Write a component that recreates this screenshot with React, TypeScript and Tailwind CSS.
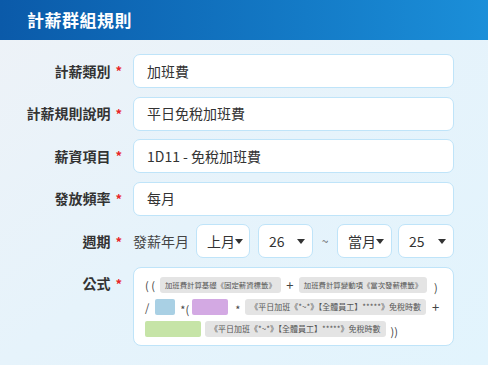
import { ReactNode } from "react";

const font = { fontFamily: '"Noto Sans CJK TC", "Noto Sans", sans-serif' };

function Label({ text }: { text: string }) {
  return (
    <div className="w-[122px] shrink-0 flex justify-end items-center font-bold text-[14px] text-[#333] whitespace-nowrap">
      {text}
      <span className="text-[#e8262b] ml-[5px] text-[13px]">*</span>
    </div>
  );
}

function Field({ label, children }: { label: string; children: ReactNode }) {
  return (
    <div className="flex items-start gap-[11px]">
      <div className="h-[34px] flex items-center shrink-0">
        <Label text={label} />
      </div>
      {children}
    </div>
  );
}

function Input({ value }: { value: string }) {
  return (
    <div className="w-[321px] h-[34px] shrink-0 bg-white border border-[#bfe4f9] rounded-[7px] flex items-center px-[13px] text-[14px] text-[#333]">
      {value}
    </div>
  );
}

function Select({ value, w }: { value: string; w: string }) {
  return (
    <div className={`${w} shrink-0 h-[34px] bg-white border border-[#bfe4f9] rounded-[7px] flex items-center justify-between pl-[10px] pr-[7px] text-[14px] text-[#333] whitespace-nowrap`}>
      <span>{value}</span>
      <svg width="8" height="5" viewBox="0 0 8 5" className="shrink-0">
        <path d="M0 0 L8 0 L4 5 Z" fill="#333" />
      </svg>
    </div>
  );
}

function Chip({ text, small }: { text: string; small?: boolean }) {
  return (
    <span className={`h-[16px] shrink-0 px-[5px] bg-[#e4e4e4] rounded-[3px] ${small ? "text-[7.4px]" : "text-[8px]"} text-[#555] flex items-center whitespace-nowrap`}>
      {text}
    </span>
  );
}

function Sym({ t }: { t: string }) {
  return <span className="shrink-0 whitespace-nowrap text-[11px] text-[#444]">{t}</span>;
}

export default function App() {
  return (
    <div style={font} className="w-[488px] h-[365px] overflow-hidden bg-gradient-to-br from-[#eef2f7] via-[#e6f3fb] to-[#e2f4fd]">
      <div className="h-[40px] bg-gradient-to-r from-[#0b5aa9] to-[#1b8fd9] flex items-center pl-[27px]">
        <h1 className="text-white font-bold text-[17px] tracking-[0.5px]">計薪群組規則</h1>
      </div>
      <div className="pt-[14px] flex flex-col gap-[8.6px]">
        <Field label="計薪類別">
          <Input value="加班費" />
        </Field>
        <Field label="計薪規則說明">
          <Input value="平日免稅加班費" />
        </Field>
        <Field label="薪資項目">
          <Input value="1D11 - 免稅加班費" />
        </Field>
        <Field label="發放頻率">
          <Input value="每月" />
        </Field>
        <Field label="週期">
          <div className="flex items-center text-[14px] text-[#444] whitespace-nowrap">
            <span className="w-[63px] shrink-0">發薪年月</span>
            <Select value="上月" w="w-[54px]" />
            <div className="w-[8px] shrink-0" />
            <Select value="26" w="w-[55px]" />
            <span className="w-[24px] shrink-0 text-center text-[12px] text-[#666]">~</span>
            <Select value="當月" w="w-[55px]" />
            <div className="w-[6px] shrink-0" />
            <Select value="25" w="w-[56px]" />
          </div>
        </Field>
        <div className="flex items-start gap-[11px]">
          <div className="h-[34px] flex items-center shrink-0">
            <Label text="公式" />
          </div>
          <div className="w-[321px] shrink-0 h-[79px] bg-white border border-[#bfe4f9] rounded-[8px] pl-[11px] pt-[8px] flex flex-col gap-[4px]">
            <div className="flex items-center h-[18px]">
              <Sym t="( (" />
              <span className="w-[5px] shrink-0" />
              <Chip small text="加班費計算基礎《固定薪資標籤》" />
              <span className="w-[18px] shrink-0 text-center text-[13px] text-[#444]">+</span>
              <Chip small text="加班費計算變動項《當次發薪標籤》" />
              <span className="ml-[7px]"><Sym t=")" /></span>
            </div>
            <div className="flex items-center h-[18px]">
              <Sym t="/" />
              <span className="w-[6px] shrink-0" />
              <span className="w-[20px] shrink-0 h-[16px] bg-[#a9d0e4] rounded-[2px]" />
              <span className="ml-[5px]"><Sym t="*(" /></span>
              <span className="ml-[3px] w-[36px] shrink-0 h-[16px] bg-[#d3a9e3] rounded-[2px]" />
              <span className="ml-[7px] mr-[5px]"><Sym t="*" /></span>
              <Chip text="《平日加班《*~*》【全體員工】*****》免稅時數" />
              <span className="ml-[6px] text-[13px] text-[#444]">+</span>
            </div>
            <div className="flex items-center h-[18px]">
              <span className="w-[56px] shrink-0 h-[16px] bg-[#c6e4a7] rounded-[2px]" />
              <span className="w-[4px] shrink-0" />
              <Chip text="《平日加班《*~*》【全體員工】*****》免稅時數" />
              <span className="ml-[5px]"><Sym t="))" /></span>
            </div>
          </div>
        </div>
      </div>
    </div>
  );
}
